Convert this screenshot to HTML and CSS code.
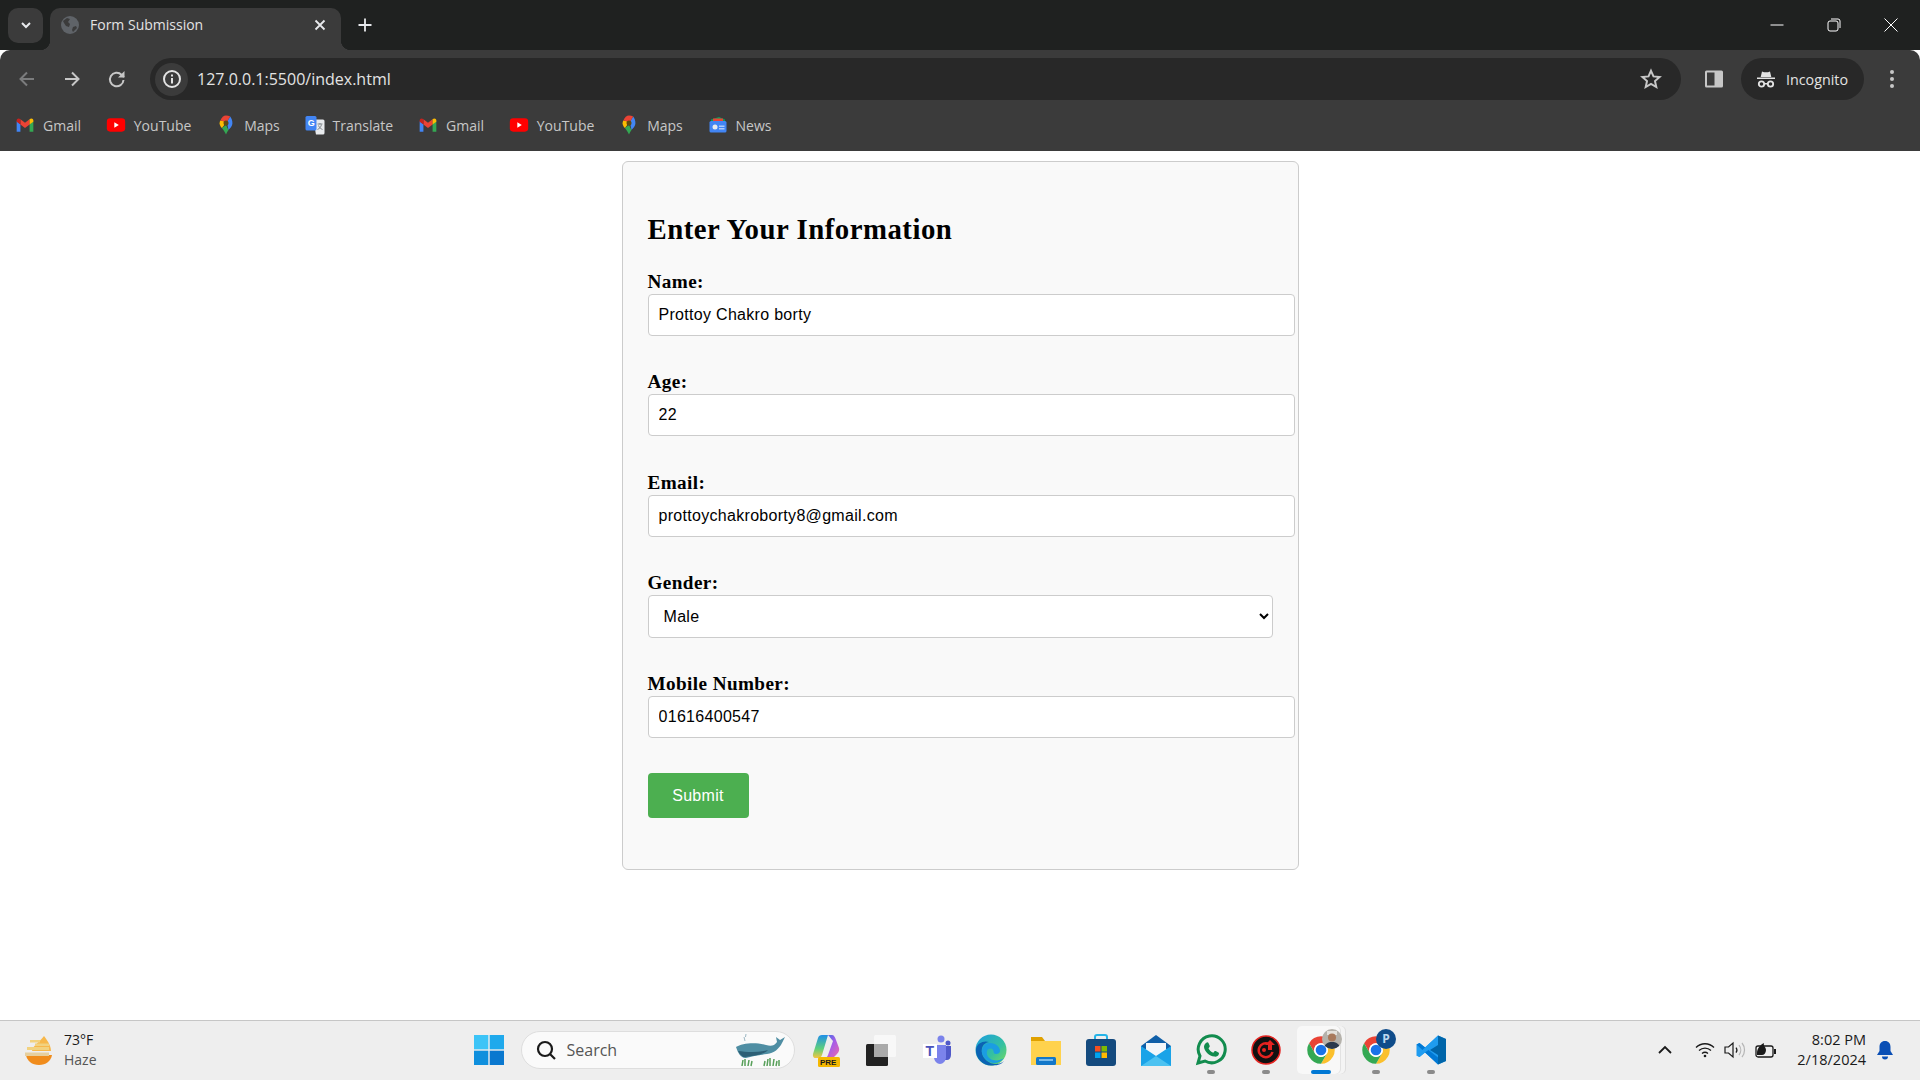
FILE: index.html
```html
<!DOCTYPE html>
<html lang="en">
<head>
    <meta charset="UTF-8">
    <meta name="viewport" content="width=device-width, initial-scale=1.0">
    <title>Form Submission</title>
    <link rel="stylesheet" href="styles.css">
</head>
<body>
    <svg class="defs" width="0" height="0" aria-hidden="true">
        <symbol id="i-gmail" viewBox="0 0 24 24">
            <path fill="#4285f4" d="M2 20h4.5v-9L2 7.5z"/>
            <path fill="#34a853" d="M17.5 20H22V7.5L17.5 11z"/>
            <path fill="#ea4335" d="M6.5 5.2v6.3l5.5 4 5.5-4V5.2L12 9.4z"/>
            <path fill="#fbbc04" d="M17.5 5.2v6.3L22 8V6.6c0-2.6-2.8-3.4-4.5-1.4z"/>
            <path fill="#c5221f" d="M2 8l4.5 3.5V5.2C4.8 3.2 2 4 2 6.6z"/>
        </symbol>
        <symbol id="i-youtube" viewBox="0 0 24 24">
            <rect x="1" y="4" width="22" height="16" rx="4" fill="#f00"/>
            <path fill="#fff" d="M10 8.8v6.4l5.4-3.2z"/>
        </symbol>
        <symbol id="i-maps" viewBox="0 0 24 24">
            <path fill="#34a853" d="M7 15.5c2.5 3 4 5.5 5 8 .7-2 1.7-3.8 3-5.5l-3-6z"/>
            <path fill="#fbbc04" d="M5.2 6.5C4.5 8 4.3 9 4.3 9.8c0 2.3 1.2 3.9 2.7 5.7l6-7z"/>
            <path fill="#4285f4" d="M17 1.8l-4 6.7 2 9.5c1-1.3 4.7-4.6 4.7-8.2 0-3-1-6-2.7-8z"/>
            <path fill="#ea4335" d="M12 .5c-2.8 0-5.3 2.2-6.8 6L13 8.5l4-6.7C15.6 1 14 .5 12 .5z"/>
            <circle cx="12" cy="9.5" r="3" fill="#5f4a10"/>
        </symbol>
        <symbol id="i-chrome" viewBox="0 0 48 48">
            <path fill="#ea4335" d="M4.95 13A22 22 0 0 1 43.05 13H24A11 11 0 0 0 14.47 29.5z"/>
            <path fill="#fbc02d" d="M43.05 13A22 22 0 0 1 24 46L33.53 29.5A11 11 0 0 0 24 13z"/>
            <path fill="#34a853" d="M24 46A22 22 0 0 1 4.95 13L14.47 29.5A11 11 0 0 0 33.53 29.5z"/>
            <circle cx="24" cy="24" r="11" fill="#fff"/>
            <circle cx="24" cy="24" r="8.5" fill="#1a73e8"/>
        </symbol>
    </svg>

    <div class="tabstrip">
        <button class="tab-search">
            <svg width="14" height="14" viewBox="0 0 14 14"><path d="M3 5l4 4 4-4" fill="none" stroke="#e8eaed" stroke-width="2"/></svg>
        </button>
        <div class="tab">
            <svg class="tab-favicon" width="20" height="20" viewBox="0 0 20 20">
                <circle cx="10" cy="10" r="9" fill="#5f6368"/>
                <path fill="#3b3b3b" d="M3 6l4-3 3 1-2 3 2 2-1 3-3-1-2-3zM13 12l3-1 1 2-4 4-1-2z"/>
            </svg>
            <span class="tab-title">Form Submission</span>
            <svg class="tab-close" width="14" height="14" viewBox="0 0 14 14"><path d="M2.5 2.5l9 9m0-9l-9 9" stroke="#e8eaed" stroke-width="1.8"/></svg>
        </div>
        <svg class="new-tab" width="16" height="16" viewBox="0 0 16 16"><path d="M8 1.5v13M1.5 8h13" stroke="#e8eaed" stroke-width="1.8"/></svg>
        <div class="window-controls">
            <svg width="14" height="14" viewBox="0 0 14 14"><path d="M.5 7h13" stroke="#fff"/></svg>
            <svg width="14" height="14" viewBox="0 0 14 14" fill="none" stroke="#fff"><rect x="1" y="3" width="10" height="10" rx="2"/><path d="M4 1h7a2 2 0 0 1 2 2v7"/></svg>
            <svg width="14" height="14" viewBox="0 0 14 14"><path d="M.5.5l13 13m0-13l-13 13" stroke="#fff"/></svg>
        </div>
    </div>

    <div class="toolbar">
        <button class="nav-btn">
            <svg width="20" height="20" viewBox="0 0 20 20" fill="none" stroke="#7b7c7d" stroke-width="2"><path d="M17 10H4M10 3.5L3.500 10l6.500 6.500"/></svg>
        </button>
        <button class="nav-btn">
            <svg width="20" height="20" viewBox="0 0 20 20" fill="none" stroke="#c7c7c7" stroke-width="2"><path d="M3 10h13M10 3.5l6.500 6.500-6.500 6.500"/></svg>
        </button>
        <button class="nav-btn">
            <svg width="20" height="20" viewBox="0 0 20 20" fill="none" stroke="#c7c7c7" stroke-width="2"><path d="M16.5 11a6.800 6.800 0 1 1-2-5.300L17 8"/><path d="M17.5 2v6.500H11" fill="#c7c7c7" stroke="none"/></svg>
        </button>
        <div class="omnibox">
            <span class="site-info">
                <svg width="20" height="20" viewBox="0 0 20 20"><circle cx="10" cy="10" r="8" fill="none" stroke="#e3e3e3" stroke-width="2"/><path d="M9 9h2v5.500H9zM9 5.500h2v2H9z" fill="#e3e3e3"/></svg>
            </span>
            <span class="url">127.0.0.1:5500/index.html</span>
            <svg class="star" width="22" height="22" viewBox="0 0 22 22"><path d="M11 2.800l2.500 5.600 6.100.6-4.600 4.100 1.300 6-5.300-3.100-5.300 3.100 1.300-6L2.400 9l6.100-.6z" fill="none" stroke="#c7c7c7" stroke-width="2"/></svg>
        </div>
        <button class="panel-btn">
            <svg width="20" height="20" viewBox="0 0 20 20"><rect x="1" y="1.5" width="18" height="17" rx="1.5" fill="#c7c7c7"/><rect x="3" y="3.5" width="7.5" height="13" fill="#3b3b3b"/></svg>
        </button>
        <div class="incognito">
            <svg width="20" height="20" viewBox="0 0 20 20" fill="#e3e3e3"><path d="M6 2.500l2 .8h4l2-.8 1.300 5.500H4.700zM1 8.500h18V10H1z"/><circle cx="5.5" cy="15" r="2.700" fill="none" stroke="#e3e3e3" stroke-width="1.800"/><circle cx="14.5" cy="15" r="2.700" fill="none" stroke="#e3e3e3" stroke-width="1.800"/><path d="M8 14h4v1.500H8z"/></svg>
            <span>Incognito</span>
        </div>
        <button class="menu-btn">
            <svg width="6" height="20" viewBox="0 0 6 20" fill="#c7c7c7"><circle cx="3" cy="3" r="2"/><circle cx="3" cy="10" r="2"/><circle cx="3" cy="17" r="2"/></svg>
        </button>
    </div>

    <div class="bookmarks">
        <div class="bookmark"><svg width="20" height="20"><use href="#i-gmail"/></svg>Gmail</div>
        <div class="bookmark"><svg width="20" height="20"><use href="#i-youtube"/></svg>YouTube</div>
        <div class="bookmark"><svg width="20" height="20"><use href="#i-maps"/></svg>Maps</div>
        <div class="bookmark">
            <svg width="20" height="20" viewBox="0 0 20 20">
                <path fill="#e8eaed" d="M8 4.500h10a1.500 1.500 0 0 1 1.500 1.500v12a1.500 1.500 0 0 1-1.500 1.500h-7z"/>
                <rect x=".5" y="1" width="11" height="14.5" rx="1.5" fill="#4285f4"/>
                <text x="2.8" y="11" class="translate-g">G</text>
                <path d="M12.500 9h5M15 8v1.500M16.500 9.500c-.5 2.500-2 4-4 5M13.500 10.500c.7 1.800 2.200 3.200 4 4" fill="none" stroke="#80868b" stroke-width="1"/>
            </svg>Translate
        </div>
        <div class="bookmark"><svg width="20" height="20"><use href="#i-gmail"/></svg>Gmail</div>
        <div class="bookmark"><svg width="20" height="20"><use href="#i-youtube"/></svg>YouTube</div>
        <div class="bookmark"><svg width="20" height="20"><use href="#i-maps"/></svg>Maps</div>
        <div class="bookmark">
            <svg width="20" height="20" viewBox="0 0 20 20">
                <path fill="#0c9d58" d="M3 4.500L11 2l6 2.500V9H3z"/>
                <path fill="#ea4335" d="M5 3.500h10V9H5z"/>
                <rect x="1.5" y="6" width="17" height="11.5" rx="1.5" fill="#4285f4"/>
                <circle cx="7" cy="12" r="2.5" fill="#e8eaed"/>
                <path d="M11 10.500h5.500v1.500H11zM11 13h5.500v1.500H11z" fill="#aecbfa"/>
            </svg>News
        </div>
    </div>

    <main class="page">
        <div class="form-card">
            <h2>Enter Your Information</h2>
            <form>
                <div class="form-group">
                    <label for="name">Name:</label>
                    <input type="text" id="name" value="Prottoy Chakro borty">
                </div>
                <div class="form-group">
                    <label for="age">Age:</label>
                    <input type="text" id="age" value="22">
                </div>
                <div class="form-group">
                    <label for="email">Email:</label>
                    <input type="text" id="email" value="prottoychakroborty8@gmail.com">
                </div>
                <div class="form-group">
                    <label for="gender">Gender:</label>
                    <select id="gender">
                        <option>Male</option>
                        <option>Female</option>
                    </select>
                </div>
                <div class="form-group">
                    <label for="mobile">Mobile Number:</label>
                    <input type="text" id="mobile" value="01616400547">
                </div>
                <button type="button" class="submit-btn">Submit</button>
            </form>
        </div>
    </main>

    <footer class="taskbar">
        <div class="weather">
            <svg width="34" height="34" viewBox="0 0 34 34">
                <path fill="#f7b84b" d="M22 3c3 4 7 9 7 15H10c1-6 8-9 12-15z"/>
                <path fill="#f08c1c" d="M4 22h26c-1 6-6 10-13 10S5 28 4 22z"/>
                <path fill="#f2d27f" d="M8 7h10v2.500H8zM5 14h22v3H5zM13 10.500h14V13H13z"/>
                <path fill="#e6cf9e" d="M3 19.500h24V23H3z"/>
            </svg>
            <div class="weather-text">
                <span>73°F</span>
                <span class="weather-sub">Haze</span>
            </div>
        </div>
        <div class="task-center">
            <div class="task-btn">
                <svg width="30" height="30" viewBox="0 0 30 30">
                    <rect x="0" y="0" width="14.3" height="14.3" fill="#3cc4f7"/>
                    <rect x="15.7" y="0" width="14.3" height="14.3" fill="#1fa9ec"/>
                    <rect x="0" y="15.7" width="14.3" height="14.3" fill="#0f8fdd"/>
                    <rect x="15.7" y="15.7" width="14.3" height="14.3" fill="#0a78cf"/>
                </svg>
            </div>
            <div class="search-box">
                <svg width="22" height="22" viewBox="0 0 22 22" fill="none" stroke="#1a1a1a" stroke-width="2.2"><circle cx="10" cy="10" r="7"/><path d="M15 15l5 5"/></svg>
                <span class="search-text">Search</span>
                <svg class="whale" width="52" height="34" viewBox="0 0 52 34">
                    <path fill="#4f8ea3" d="M2 14c6-4 20-5 30-2 5 1.500 8 1 11-3l-1-5 4 3 5-3-3 6c-3 6-8 10-15 11-8 1-15 2-21 4-5 .5-8-5-10-11z"/>
                    <path fill="#2d5f75" d="M4 18c8 1 20 2 30-1-5 5-14 6-23 7-3 .5-5-3-7-6z"/>
                    <path d="M10 4l1 4M12 1l-.5 3" stroke="#9db8c4"/>
                    <path d="M8 33l1-6M11 33v-7M14 33l1-6M17 33l1-5M30 33l1-5M33 33l1-7M36 33v-8M39 33l1-7M42 33l1-5M45 33v-6" stroke="#58a05a" stroke-width="1.5"/>
                </svg>
            </div>
            <div class="task-btn">
                <svg width="36" height="36" viewBox="0 0 36 36">
                    <defs>
                        <linearGradient id="cp-left" x1="0" y1="0" x2="0" y2="1"><stop offset="0" stop-color="#1f8fe8"/><stop offset=".6" stop-color="#5fd07a"/><stop offset="1" stop-color="#f5c542"/></linearGradient>
                        <linearGradient id="cp-right" x1="0" y1="0" x2="1" y2="1"><stop offset="0" stop-color="#2f6fe6"/><stop offset=".5" stop-color="#a85ee6"/><stop offset="1" stop-color="#f06aa8"/></linearGradient>
                    </defs>
                    <path fill="url(#cp-left)" d="M5 22L10 6c.5-2 2-3 4-3h6l-6 20c-.5 2-2 3-4 3H7c-1.500 0-2.500-2-2-4z"/>
                    <path fill="url(#cp-right)" d="M20 3h4c2 0 3 2 4 5l3 8c.5 2 0 4-2 6l-3 3c-1 1-2 1-3 1h-7c2 0 3.500-1 4-3l5-14c-2-2-3-4-5-6z"/>
                    <rect x="10" y="25" width="22" height="10" rx="1.5" fill="#f5b800"/>
                    <text x="12" y="33" class="pre-label">PRE</text>
                </svg>
            </div>
            <div class="task-btn">
                <svg width="32" height="32" viewBox="0 0 32 32">
                    <rect x="1" y="10" width="22" height="22" rx="1.5" fill="#222"/>
                    <rect x="9" y="1" width="22" height="22" rx="1.5" fill="#fff" fill-opacity=".6"/>
                    <rect x="9" y="10" width="14" height="13" fill="#aaa"/>
                </svg>
            </div>
            <div class="task-btn">
                <svg width="32" height="32" viewBox="0 0 32 32">
                    <circle cx="21" cy="5" r="3.5" fill="#7b83eb"/>
                    <circle cx="28" cy="9" r="2.5" fill="#5059c9"/>
                    <path fill="#5059c9" d="M24 12h7v9c0 3-2 5-4 5h-3z"/>
                    <path fill="#7b83eb" d="M14 11h12v12c0 4-3 7-6 7s-6-3-6-7z"/>
                    <rect x="3" y="10" width="14" height="14" fill="#fff"/>
                    <text x="5.5" y="22" class="teams-t">T</text>
                </svg>
            </div>
            <div class="task-btn">
                <svg width="32" height="32" viewBox="0 0 32 32">
                    <defs>
                        <linearGradient id="edge-top" x1="0" y1="0" x2="1" y2="1"><stop offset="0" stop-color="#1b9de2"/><stop offset=".6" stop-color="#35c1a0"/><stop offset="1" stop-color="#7ddc5a"/></linearGradient>
                    </defs>
                    <circle cx="16" cy="16" r="15.5" fill="url(#edge-top)"/>
                    <path fill="#0b63b4" d="M1 15c1-6 8-9 13-7-6 1-8 6-7 11 1 6 7 11 14 11 3 0 6-1 8-3-3 4-8 4.500-13 4.500C8 31.500 0 24 1 15z"/>
                    <path fill="#1b9de2" d="M7 19c-1-5 3-10 8-10 6 0 10 4 10 8 0 2-2 3-4 3-3 0-2-3-3-4-1-2-5-2-6 1-1 3 1 8 6 9 4 1 8 0 11-2-3 4-7 5.500-11 5-5-1-10-5-11-10z"/>
                </svg>
            </div>
            <div class="task-btn">
                <svg width="32" height="32" viewBox="0 0 32 32">
                    <path fill="#e0a100" d="M1 3h11l3 4h16v5H1z"/>
                    <rect x="1" y="7" width="30" height="24" fill="#ffd24d"/>
                    <rect x="6" y="23" width="20" height="8" rx="1.5" fill="#1277c9"/>
                    <path d="M9 26h14" stroke="#9bd0f5" stroke-width="1.5"/>
                </svg>
            </div>
            <div class="task-btn">
                <svg width="32" height="32" viewBox="0 0 32 32">
                    <path d="M10 6V3a2 2 0 0 1 2-2h8a2 2 0 0 1 2 2v3" fill="none" stroke="#25b4e8" stroke-width="2"/>
                    <rect x="1" y="5" width="30" height="27" rx="3" fill="#144a7e"/>
                    <rect x="10" y="12" width="5.5" height="5.5" fill="#f25022"/>
                    <rect x="16.5" y="12" width="5.5" height="5.5" fill="#7fba00"/>
                    <rect x="10" y="18.5" width="5.5" height="5.5" fill="#00a4ef"/>
                    <rect x="16.5" y="18.5" width="5.5" height="5.5" fill="#ffb900"/>
                </svg>
            </div>
            <div class="task-btn">
                <svg width="32" height="32" viewBox="0 0 32 32">
                    <path fill="#0f5fa8" d="M16 1L1 12v3h30v-3z"/>
                    <path fill="#f2f6fa" d="M6 9h20v12H6z"/>
                    <path fill="#1aa3e8" d="M1 12l15 10 15-10v20H1z"/>
                    <path fill="#4cc2f1" d="M1 32l15-10 15 10z"/>
                </svg>
            </div>
            <div class="task-btn running">
                <svg width="32" height="32" viewBox="0 0 32 32">
                    <path fill="none" stroke="#128c4e" stroke-width="3" d="M3 29l2-7a13.500 13.500 0 1 1 5 5z"/>
                    <path fill="#128c4e" d="M11 9c1-1 2-1 2.500 0l1.200 2.800c.2.600 0 1-.4 1.500l-.8.900c1 2 2.500 3.500 4.800 4.500l1-1.200c.4-.5.900-.6 1.400-.4l2.700 1.300c.6.300.7.900.5 1.500-.5 2-2.500 3-4.500 2.700C14 22 9.500 17.500 9 13c-.1-1.500.8-3 2-4z"/>
                </svg>
                <i class="dot"></i>
            </div>
            <div class="task-btn running">
                <svg width="30" height="30" viewBox="0 0 30 30">
                    <circle cx="15" cy="15" r="14" fill="#111" stroke="#e52320" stroke-width="1.5"/>
                    <path fill="none" stroke="#e52320" stroke-width="2.5" d="M18 9a7 7 0 1 0 3.500 8"/>
                    <path fill="#e52320" d="M19 5l5 5h-3v5h-4v-5h-3z"/>
                    <circle cx="13" cy="15" r="2" fill="#e52320"/>
                </svg>
                <i class="dot"></i>
            </div>
            <div class="task-btn running active">
                <svg width="30" height="30"><use href="#i-chrome"/></svg>
                <svg class="profile-pic" width="20" height="20" viewBox="0 0 20 20">
                    <defs><clipPath id="pic-clip"><circle cx="10" cy="10" r="10"/></clipPath></defs>
                    <g clip-path="url(#pic-clip)">
                        <rect width="20" height="20" fill="#b5b2ab"/>
                        <path d="M5 2h10v4H5z" fill="#e4e2dc"/>
                        <circle cx="10" cy="8.5" r="4" fill="#a87a5c"/>
                        <path d="M1 21c1-6 5-8 9-8s8 2 9 8z" fill="#2b3a4d"/>
                    </g>
                </svg>
                <i class="dot"></i>
            </div>
            <div class="task-btn running">
                <svg width="30" height="30"><use href="#i-chrome"/></svg>
                <span class="profile-badge">P</span>
                <i class="dot"></i>
            </div>
            <div class="task-btn running">
                <svg width="30" height="30" viewBox="0 0 30 30">
                    <path fill="#1f9cf0" d="M22 .5L30 4v22l-8 3.500-13-12L3.500 22 .5 20.500v-11L3.500 8 9 12.500z"/>
                    <path fill="#0065a9" d="M22 .5L30 4v22l-8 3.500V20l-8-5 8-5z"/>
                    <path fill="#0078d4" d="M3.500 8L22 22.500V29.500L.5 9.500z"/>
                    <path fill="#1f9cf0" d="M22 .5V8L9 17.500 3.500 22 .5 20.500z"/>
                </svg>
                <i class="dot"></i>
            </div>
        </div>
        <div class="tray">
            <svg class="tray-chevron" width="16" height="10" viewBox="0 0 16 10" fill="none" stroke="#1a1a1a" stroke-width="1.8"><path d="M2 8l6-6 6 6"/></svg>
            <svg class="tray-wifi" width="20" height="16" viewBox="0 0 20 16" fill="none" stroke="#1a1a1a" stroke-width="1.3"><path d="M1 5.500c5-5 13-5 18 0M4 8.500c3.500-3.200 8.500-3.200 12 0M7 11.500c1.800-1.500 4.200-1.500 6 0"/><circle cx="10" cy="14" r="1.3" fill="#1a1a1a" stroke="none"/></svg>
            <svg class="tray-sound" width="22" height="18" viewBox="0 0 22 18" fill="none" stroke="#1a1a1a" stroke-width="1.2"><path d="M1 6h3.500L9 2v14l-4.500-4H1z"/><path d="M12 6.500a4 4 0 0 1 0 5"/><path d="M15 4a8 8 0 0 1 0 10M18 2a11 11 0 0 1 0 14" stroke="#b5b5b5"/></svg>
            <svg class="tray-battery" width="22" height="18" viewBox="0 0 22 18"><rect x="1" y="5" width="17" height="11" rx="2" fill="none" stroke="#1a1a1a" stroke-width="1.3"/><path d="M19 8h2v5h-2z" fill="#1a1a1a"/><path d="M2 12c0-4 3-8 7-10-1 3 2 4 2 7s-2 5-4 5H2z" fill="#1a1a1a"/></svg>
            <div class="clock">
                <span>8:02 PM</span>
                <span>2/18/2024</span>
            </div>
            <svg class="tray-bell" width="18" height="20" viewBox="0 0 18 20" fill="#0a4fb5"><path d="M9 1c3.500 0 5.500 2.500 5.500 6v4l2.500 4H1l2.500-4V7C3.500 3.500 5.500 1 9 1z"/><path d="M6 16.500h6a3 3 0 0 1-6 0z"/></svg>
        </div>
    </footer>
</body>
</html>
```

FILE: styles.css
```css
* {
    margin: 0;
    padding: 0;
    box-sizing: border-box;
}

html, body {
    height: 100%;
}

body {
    display: flex;
    flex-direction: column;
    overflow: hidden;
    font-family: "Open Sans", "Liberation Sans", sans-serif;
    background: #fff;
}

button {
    border: none;
    background: none;
}

.defs {
    position: absolute;
}

/* browser chrome */
.tabstrip {
    display: flex;
    align-items: center;
    height: 50px;
    padding-left: 8px;
    background: #1f2120;
}

.tab-search {
    display: flex;
    align-items: center;
    justify-content: center;
    width: 35px;
    height: 35px;
    margin-right: 7px;
    border-radius: 10px;
    background: #3b3b3b;
}

.tab {
    position: relative;
    display: flex;
    align-items: center;
    align-self: flex-end;
    width: 291px;
    height: 42px;
    padding: 0 14px 9px 10px;
    border-radius: 10px 10px 0 0;
    background: #3b3b3b;
}

.tab::before,
.tab::after {
    content: "";
    position: absolute;
    bottom: 0;
    width: 10px;
    height: 10px;
}

.tab::before {
    left: -10px;
    background: radial-gradient(circle at 0 0, transparent 10px, #3b3b3b 10.5px);
}

.tab::after {
    right: -10px;
    background: radial-gradient(circle at 100% 0, transparent 10px, #3b3b3b 10.5px);
}

.tab-favicon {
    flex-shrink: 0;
}

.tab-title {
    flex: 1;
    margin-left: 10px;
    color: #e3e3e3;
    font-size: 14px;
}

.new-tab {
    margin-left: 16px;
}

.window-controls {
    display: flex;
    gap: 43px;
    align-items: center;
    margin-left: auto;
    padding-right: 22px;
}

.toolbar {
    display: flex;
    align-items: center;
    height: 58px;
    padding: 0 10px 0 7px;
    border-radius: 10px 10px 0 0;
    background: #3b3b3b;
}

.nav-btn {
    display: flex;
    align-items: center;
    justify-content: center;
    width: 40px;
    height: 40px;
    margin-right: 5px;
}

.omnibox {
    display: flex;
    flex: 1;
    align-items: center;
    height: 42px;
    margin-left: 8px;
    padding: 0 19px 0 5px;
    border-radius: 21px;
    background: #282828;
}

.site-info {
    display: flex;
    align-items: center;
    justify-content: center;
    width: 33px;
    height: 33px;
    border-radius: 50%;
    background: #3b3b3b;
}

.url {
    flex: 1;
    margin-left: 9px;
    color: #e3e3e3;
    font-size: 16px;
}

.panel-btn {
    display: flex;
    align-items: center;
    justify-content: center;
    width: 36px;
    height: 36px;
    margin-left: 15px;
}

.incognito {
    display: flex;
    align-items: center;
    gap: 10px;
    width: 123px;
    height: 42px;
    margin-left: 9px;
    padding-left: 15px;
    border-radius: 21px;
    color: #e3e3e3;
    font-size: 14.3px;
    background: #282828;
}

.menu-btn {
    display: flex;
    align-items: center;
    justify-content: center;
    width: 36px;
    height: 36px;
    margin-left: 10px;
}

.bookmarks {
    display: flex;
    gap: 24.8px;
    align-items: center;
    height: 43px;
    padding: 0 0 9px 15px;
    background: #3b3b3b;
}

.bookmark {
    display: flex;
    gap: 8px;
    align-items: center;
    color: #c7c7c7;
    font-size: 14px;
}

.translate-g {
    fill: #fff;
    font: bold 9px "Liberation Sans", sans-serif;
}

/* the page itself */
.page {
    flex: 1;
    padding-top: 10px;
    font-family: "Liberation Serif", serif;
    font-size: 19.2px;
}

.form-card {
    width: 677px;
    height: 708.5px;
    margin: 0 auto;
    padding: 25px;
    border: 1px solid #ccc;
    border-radius: 6px;
    background: #f9f9f9;
}

.form-card h2 {
    margin: 26px 0 23px;
    font-size: 28.8px;
    letter-spacing: .5px;
}

.form-group {
    margin-bottom: 33.4px;
}

.form-group label {
    display: block;
    height: 25px;
    font-weight: bold;
    line-height: 25px;
    letter-spacing: .4px;
}

.form-group input {
    display: block;
    width: 647px;
    height: 42px;
    padding: 10px;
    border: 1px solid #ccc;
    border-radius: 4px;
    font-family: "Liberation Sans", sans-serif;
    font-size: 16px;
    letter-spacing: .3px;
    background: #fff;
}

.form-group select {
    display: block;
    width: 625px;
    height: 42.5px;
    padding: 10px 11px;
    border: 1px solid #ccc;
    border-radius: 4px;
    font-family: "Liberation Sans", sans-serif;
    font-size: 16px;
    letter-spacing: .3px;
    background: #fff;
}

.submit-btn {
    width: 101px;
    height: 45px;
    margin-top: 2px;
    border-radius: 4px;
    color: #fff;
    font-family: "Liberation Sans", sans-serif;
    font-size: 16px;
    letter-spacing: .3px;
    background: #4caf50;
}

/* windows taskbar */
.taskbar {
    display: flex;
    align-items: center;
    flex-shrink: 0;
    height: 60px;
    padding-bottom: 1px;
    border-top: 1px solid #c6c6c6;
    color: #1a1a1a;
    background: #eee;
}

.weather {
    display: flex;
    gap: 8px;
    align-items: center;
    width: 461px;
    padding-left: 22px;
}

.weather-text {
    display: flex;
    flex-direction: column;
    gap: 1px;
    margin-bottom: 2px;
    font-size: 14px;
    line-height: 19px;
}

.weather-sub {
    color: #555;
}

.task-center {
    display: flex;
    align-items: center;
}

.task-btn {
    position: relative;
    display: flex;
    align-items: center;
    justify-content: center;
    width: 55px;
    height: 48px;
}

.task-btn.active::before {
    content: "";
    position: absolute;
    top: 0;
    left: 4px;
    width: 43px;
    height: 48px;
    border-radius: 5px;
    background: #f8f8f8;
    box-shadow: 1px 0 0 #e2e2e2, 5px 0 0 #f4f4f4, 6px 0 0 #dedede;
}

.task-btn svg {
    position: relative;
}

.dot {
    position: absolute;
    bottom: 0;
    left: 50%;
    width: 8px;
    height: 4px;
    margin-left: -4px;
    border-radius: 2px;
    background: #8a8a8a;
}

.active .dot {
    width: 20px;
    margin-left: -10px;
    background: #0078d4;
}

.task-btn .profile-pic {
    position: absolute;
    top: 3px;
    right: 6px;
}

.profile-badge {
    position: absolute;
    top: 3px;
    right: 7px;
    width: 20px;
    height: 20px;
    border-radius: 50%;
    color: #bcd7f0;
    font-size: 12px;
    font-weight: bold;
    line-height: 20px;
    text-align: center;
    background: #0f4c8a;
}

.pre-label {
    fill: #1a1a1a;
    font: bold 8px "Liberation Sans", sans-serif;
}

.teams-t {
    fill: #4b53bc;
    font: bold 14px "Liberation Sans", sans-serif;
}

.search-box {
    display: flex;
    align-items: center;
    width: 274px;
    height: 38px;
    margin: 0 3.5px 0 4.5px;
    padding: 0 8px 0 13px;
    border: 1px solid #dedede;
    border-radius: 19px;
    background: #fafafa;
}

.search-text {
    flex: 1;
    margin-left: 10px;
    color: #555;
    font-size: 16px;
}

.tray {
    display: flex;
    align-items: center;
    margin-left: auto;
    padding-right: 26px;
}

.tray-chevron {
    margin-right: 22px;
}

.tray-wifi {
    margin-right: 9px;
}

.tray-sound {
    margin-right: 9px;
}

.tray-battery {
    margin-right: 20px;
}

.clock {
    display: flex;
    flex-direction: column;
    align-items: flex-end;
    gap: 1px;
    margin-bottom: 2px;
    font-size: 14.5px;
    line-height: 19px;
}

.tray-bell {
    margin-left: 10px;
}
```
